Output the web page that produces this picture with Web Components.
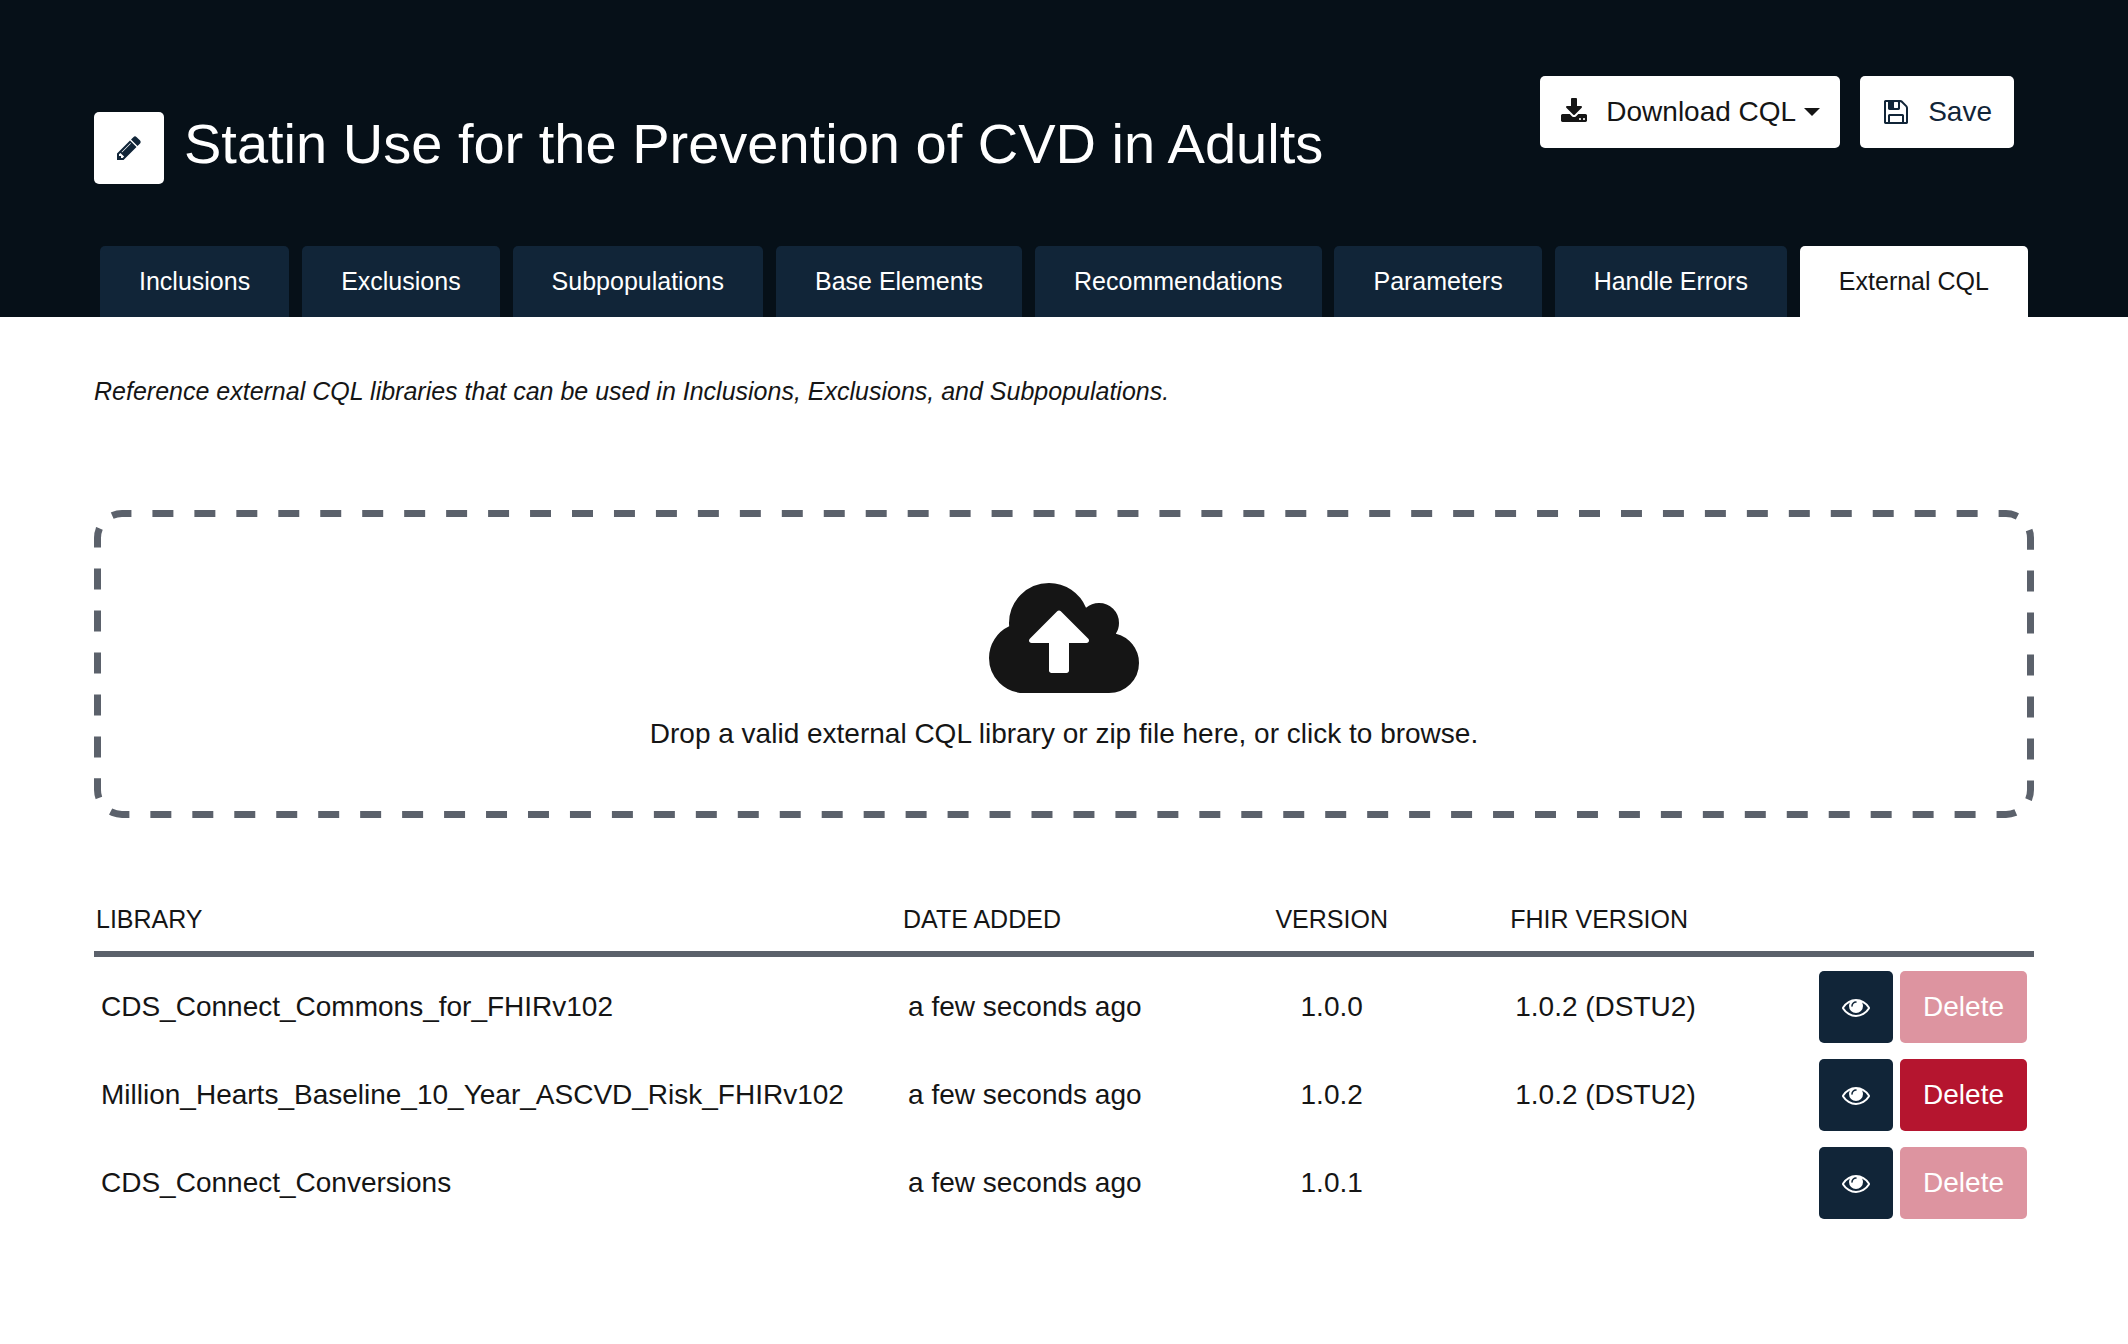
<!DOCTYPE html>
<html lang="en">
<head>
<meta charset="utf-8">
<title>Statin Use for the Prevention of CVD in Adults</title>
<meta name="viewport" content="width=device-width, initial-scale=1">
<style>
  html, body { margin: 0; }
  body {
    --ink: #151515;
    --navy: #112538;
    --night: #061018;
    --slate: #5b616b;
    --danger: #b5152f;
    background: #fff;
    color: var(--ink);
    font-family: "Liberation Sans", Arial, sans-serif;
    font-size: 28px;
  }
</style>
</head>
<body>
<workspace-page></workspace-page>
<script>
const ICONS = {
  pencil: ['0 0 1792 1792', 'M491 1536l91-91-235-235-91 91v107h128v128h107zm523-928q0-22-22-22-10 0-17 7l-542 542q-7 7-7 17 0 22 22 22 10 0 17-7l542-542q7-7 7-17zm-54-192l416 416-832 832h-416v-416zm683 96q0 53-37 90l-166 166-416-416 166-165q36-38 90-38 53 0 91 38l235 234q37 39 37 91z'],
  download: ['0 0 1792 1792', 'M1344 1344q0-26-19-45t-45-19-45 19-19 45 19 45 45 19 45-19 19-45zm256 0q0-26-19-45t-45-19-45 19-19 45 19 45 45 19 45-19 19-45zm128-224v320q0 40-28 68t-68 28h-1472q-40 0-68-28t-28-68v-320q0-40 28-68t68-28h465l135 136q58 56 136 56t136-56l136-136h464q40 0 68 28t28 68zm-325-569q17 41-14 70l-448 448q-18 19-45 19t-45-19l-448-448q-31-29-14-70 17-39 59-39h256v-448q0-26 19-45t45-19h256q26 0 45 19t19 45v448h256q42 0 59 39z'],
  save: ['0 0 1792 1792', 'M512 1536h768v-384h-768v384zm896 0h128v-896q0-14-10-38.5t-20-34.5l-281-281q-10-10-34-20t-39-10v416q0 40-28 68t-68 28h-576q-40 0-68-28t-28-68v-416h-128v1280h128v-416q0-40 28-68t68-28h832q40 0 68 28t28 68v416zm-384-928v-320q0-13-9.5-22.5t-22.5-9.5h-192q-13 0-22.5 9.5t-9.5 22.5v320q0 13 9.5 22.5t22.5 9.5h192q13 0 22.5-9.5t9.5-22.5zm640 32v928q0 40-28 68t-68 28h-1344q-40 0-68-28t-28-68v-1344q0-40 28-68t68-28h928q40 0 88 20t76 48l280 280q28 28 48 76t20 88z'],
  eye: ['0 0 1792 1792', 'M1664 960q-152-236-381-353 61 104 61 225 0 185-131.5 316.5t-316.5 131.5-316.5-131.5-131.5-316.5q0-121 61-225-229 117-381 353 133 205 333.5 326.5t434.5 121.5 434.5-121.5 333.5-326.5zm-720-384q0-20-14-34t-34-14q-125 0-214.5 89.5t-89.5 214.5q0 20 14 34t34 14 34-14 14-34q0-86 61-147t147-61q20 0 34-14t14-34zm848 384q0 34-20 69-140 230-376.5 368.5t-499.5 138.5-499.5-139-376.5-368q-20-35-20-69t20-69q140-229 376.5-368t499.5-139 499.5 139 376.5 368q20 35 20 69z'],
  upload: ['0 128 1920 1408', 'M1280 864q0-14-9-23l-352-352q-9-9-23-9t-23 9l-351 351q-10 12-10 24 0 14 9 23t23 9h224v352q0 13 9.5 22.5t22.5 9.5h192q13 0 22.5-9.5t9.5-22.5v-352h224q13 0 22.5-9.5t9.5-22.5zm640 288q0 159-112.5 271.5t-271.5 112.5h-1088q-185 0-316.5-131.5t-131.5-316.5q0-130 70-240t188-165q-2-30-2-43 0-212 150-362t362-150q156 0 285.5 87t188.5 231q71-62 166-62 106 0 181 75t75 181q0 76-41 138 130 31 213.5 135.5t83.5 238.5z'],
  caret: ['0 0 16 8', 'M0 0H16L8 8Z']
};

class AppIcon extends HTMLElement {
  constructor() { super(); this.attachShadow({ mode: 'open' }); }
  connectedCallback() {
    const [box, path] = ICONS[this.getAttribute('name')];
    this.shadowRoot.innerHTML = `
      <style>
        :host { display: inline-block; flex: none; width: 28px; height: 28px; }
        svg { display: block; width: 100%; height: 100%; fill: currentColor; }
      </style>
      <svg viewBox="${box}" aria-hidden="true"><path d="${path}"/></svg>`;
  }
}

class AppButton extends HTMLElement {
  constructor() { super(); this.attachShadow({ mode: 'open' }); }
  connectedCallback() {
    const label = this.getAttribute('label');
    this.shadowRoot.innerHTML = `
      <style>
        :host { display: inline-block; }
        button {
          display: flex; align-items: center; justify-content: center; gap: 18px;
          height: 72px; padding: 0 22px; border: 0; border-radius: 5px;
          background: #fff; color: var(--navy); font: inherit; white-space: nowrap; cursor: pointer;
        }
        :host([kind="edit"]) button { padding: 0 21px; }
        :host([kind="menu"]) button { padding: 0 20px; color: var(--ink); }
        :host([kind="view"]) button { padding: 0 23px; background: var(--navy); color: #fff; }
        :host([kind="danger"]) button { padding: 0 23px; background: var(--danger); color: #fff; }
        button:disabled { opacity: .45; cursor: default; }
      </style>
      <button type="button" ${label ? `aria-label="${label}"` : ''} ${this.hasAttribute('disabled') ? 'disabled' : ''}><slot></slot></button>`;
  }
}

class WorkspaceTab extends HTMLElement {
  constructor() { super(); this.attachShadow({ mode: 'open' }); }
  connectedCallback() {
    this.shadowRoot.innerHTML = `
      <style>
        :host { display: block; }
        button {
          display: block; padding: 21px 39px; border: 0; border-radius: 5px 5px 0 0;
          background: var(--navy); color: #fff; font: inherit; font-size: 25px; line-height: 29px;
          white-space: nowrap; cursor: pointer;
        }
        :host([selected]) button { background: #fff; color: var(--ink); }
      </style>
      <button type="button" role="tab" aria-selected="${this.hasAttribute('selected')}"><slot></slot></button>`;
  }
}

class WorkspaceHeader extends HTMLElement {
  constructor() {
    super();
    this.attachShadow({ mode: 'open' }).innerHTML = `
      <style>
        :host { display: block; padding: 76px 94px 0; background: var(--night); color: #fff; }
        .top { display: flex; justify-content: space-between; align-items: flex-start; }
        .name { display: flex; align-items: flex-start; gap: 20px; padding-top: 36px; }
        h1 { margin: 0; font-size: 56px; line-height: 64px; font-weight: 400; }
        .actions { display: flex; gap: 20px; padding-right: 20px; }
        .label-caret { display: flex; align-items: center; gap: 8px; }
        .label-caret app-icon { width: 16px; height: 8px; }
        nav { display: flex; justify-content: space-between; padding: 62px 6px 0; }
      </style>
      <div class="top">
        <div class="name">
          <app-button kind="edit" label="Edit artifact"><app-icon name="pencil"></app-icon></app-button>
          <h1><slot></slot></h1>
        </div>
        <div class="actions">
          <app-button kind="menu"><app-icon name="download"></app-icon><span class="label-caret">Download CQL<app-icon name="caret"></app-icon></span></app-button>
          <app-button><app-icon name="save"></app-icon>Save</app-button>
        </div>
      </div>
      <nav role="tablist">
        <workspace-tab>Inclusions</workspace-tab>
        <workspace-tab>Exclusions</workspace-tab>
        <workspace-tab>Subpopulations</workspace-tab>
        <workspace-tab>Base Elements</workspace-tab>
        <workspace-tab>Recommendations</workspace-tab>
        <workspace-tab>Parameters</workspace-tab>
        <workspace-tab>Handle Errors</workspace-tab>
        <workspace-tab selected>External CQL</workspace-tab>
      </nav>`;
  }
}

class FileDrop extends HTMLElement {
  constructor() {
    super();
    this.attachShadow({ mode: 'open' }).innerHTML = `
      <style>
        :host { display: block; }
        label {
          display: flex; flex-direction: column; align-items: center; gap: 24px;
          position: relative; overflow: hidden; border-radius: 28px;
          padding: 73px 27px 67px; line-height: 34px; cursor: pointer;
        }
        /* Dashed outline: the outer half of the stroke is clipped by the label. */
        .outline { position: absolute; inset: 0; width: 100%; height: 100%; pointer-events: none; }
        .outline rect { fill: none; stroke: var(--slate); stroke-width: 14px; stroke-dasharray: 1 1; stroke-dashoffset: .55; }
        app-icon { width: 150px; height: 110px; }
        input { position: absolute; width: 1px; height: 1px; opacity: 0; }
      </style>
      <label for="file">
        <svg class="outline" aria-hidden="true"><rect width="100%" height="100%" rx="28" pathLength="212"/></svg>
        <app-icon name="upload"></app-icon><span><slot></slot></span>
      </label>
      <input id="file" type="file">`;
  }
}

class LibraryTable extends HTMLElement {
  constructor() { super(); this.attachShadow({ mode: 'open' }); }
  connectedCallback() {
    const rows = [
      ['CDS_Connect_Commons_for_FHIRv102', 'a few seconds ago', '1.0.0', '1.0.2 (DSTU2)', true],
      ['Million_Hearts_Baseline_10_Year_ASCVD_Risk_FHIRv102', 'a few seconds ago', '1.0.2', '1.0.2 (DSTU2)', false],
      ['CDS_Connect_Conversions', 'a few seconds ago', '1.0.1', '', true]
    ];
    this.shadowRoot.innerHTML = `
      <style>
        :host { display: block; }
        table { width: 100%; border-collapse: separate; border-spacing: 0; table-layout: fixed; }
        th, td { text-align: left; white-space: nowrap; }
        th { padding: 0 2px 17px; border-bottom: 6px solid var(--slate); font-size: 25px; line-height: 30px; font-weight: 400; }
        td { height: 72px; padding: 14px 7px 2px; }
        .version { text-align: center; }
        .buttons { display: flex; justify-content: flex-end; gap: 7px; }
      </style>
      <table>
        <colgroup><col style="width:41.6%"><col style="width:13.1%"><col style="width:18.2%"><col style="width:13.5%"><col></colgroup>
        <thead><tr><th>LIBRARY</th><th>DATE ADDED</th><th class="version">VERSION</th><th>FHIR VERSION</th><th></th></tr></thead>
        <tbody>${rows.map(([name, added, version, fhir, locked]) => `
          <tr><td>${name}</td><td>${added}</td><td class="version">${version}</td><td>${fhir}</td>
          <td><div class="buttons"><app-button kind="view" label="View ${name}"><app-icon name="eye"></app-icon></app-button><app-button kind="danger" ${locked ? 'disabled' : ''}>Delete</app-button></div></td></tr>`).join('')}
        </tbody>
      </table>`;
  }
}

class WorkspacePage extends HTMLElement {
  constructor() {
    super();
    this.attachShadow({ mode: 'open' }).innerHTML = `
      <style>
        :host { display: block; }
        main { padding: 59px 94px; }
        p { margin: 0 0 104px; font-size: 25px; line-height: 30px; font-style: italic; }
        file-drop { margin-bottom: 86px; }
      </style>
      <workspace-header>Statin Use for the Prevention of CVD in Adults</workspace-header>
      <main>
        <p>Reference external CQL libraries that can be used in Inclusions, Exclusions, and Subpopulations.</p>
        <file-drop>Drop a valid external CQL library or zip file here, or click to browse.</file-drop>
        <library-table></library-table>
      </main>`;
  }
}

customElements.define('app-icon', AppIcon);
customElements.define('app-button', AppButton);
customElements.define('workspace-tab', WorkspaceTab);
customElements.define('workspace-header', WorkspaceHeader);
customElements.define('file-drop', FileDrop);
customElements.define('library-table', LibraryTable);
customElements.define('workspace-page', WorkspacePage);
</script>
</body>
</html>
